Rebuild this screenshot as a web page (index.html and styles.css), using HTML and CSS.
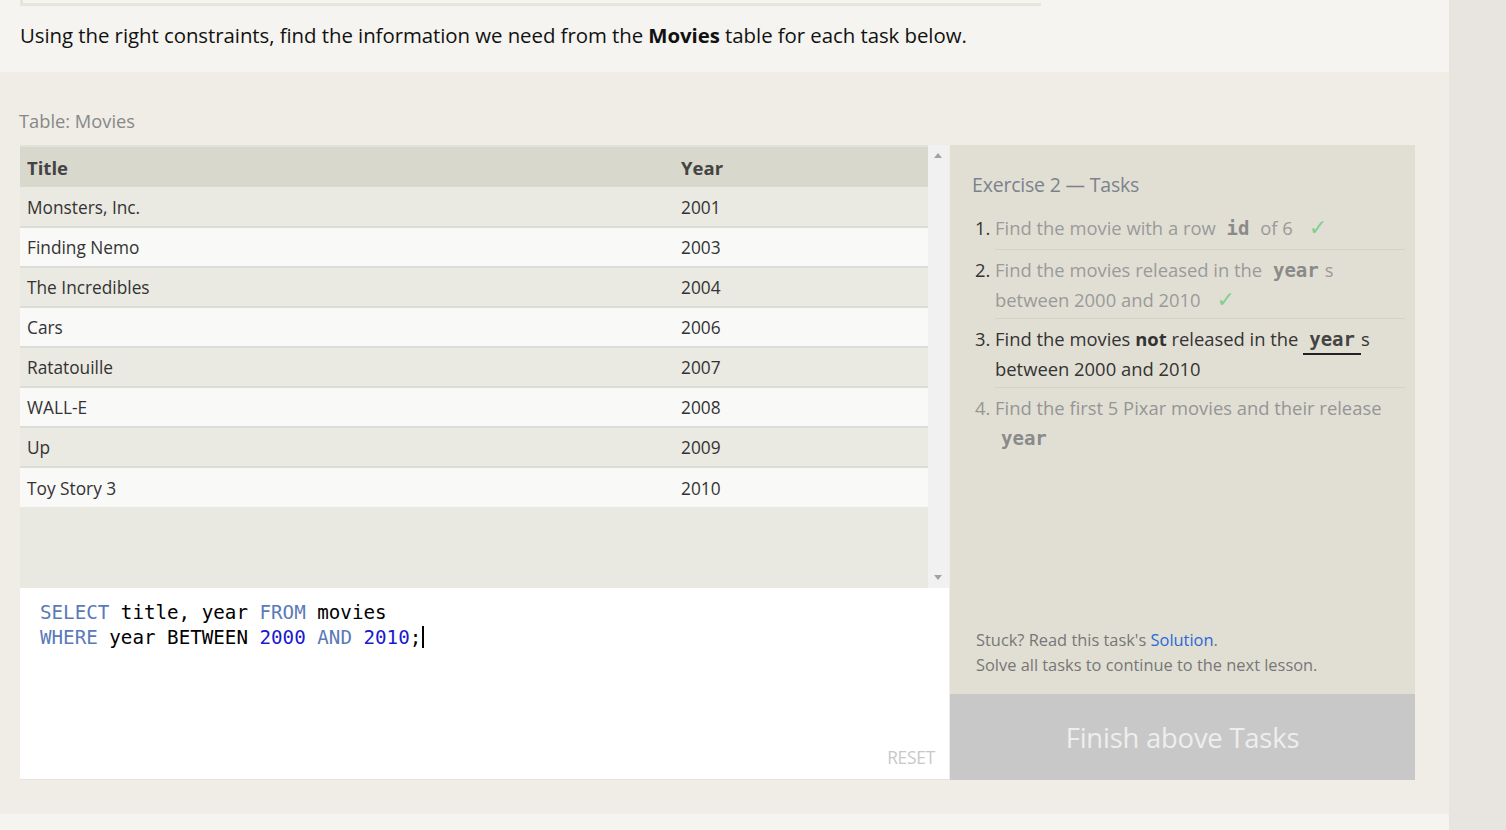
FILE: index.html
```html
<!DOCTYPE html>
<html>
<head>
<meta charset="utf-8">
<link rel="stylesheet" href="styles.css">
</head>
<body>
<div class="page">
  <main class="main">
    <section class="intro">
      <div class="topbar"></div>
      <p class="intro-text">Using the right constraints, find the information we need from the <strong>Movies</strong> table for each task below.</p>
    </section>
    <section class="band">
      <div class="table-label">Table: Movies</div>
      <div class="exercise">
        <div class="left">
          <div class="table-wrap">
            <div class="table-scroll">
              <table class="movies">
                <thead><tr><th class="c-title">Title</th><th class="c-year">Year</th></tr></thead>
                <tbody>
                  <tr><td>Monsters, Inc.</td><td>2001</td></tr>
                  <tr><td>Finding Nemo</td><td>2003</td></tr>
                  <tr><td>The Incredibles</td><td>2004</td></tr>
                  <tr><td>Cars</td><td>2006</td></tr>
                  <tr><td>Ratatouille</td><td>2007</td></tr>
                  <tr><td>WALL-E</td><td>2008</td></tr>
                  <tr><td>Up</td><td>2009</td></tr>
                  <tr><td>Toy Story 3</td><td>2010</td></tr>
                </tbody>
              </table>
            </div>
            <div class="scrollbar">
              <span class="arrow up"></span>
              <span class="arrow down"></span>
            </div>
          </div>
          <div class="editor">
            <pre class="code"><span class="kw">SELECT</span> title, year <span class="kw">FROM</span> movies
<span class="kw">WHERE</span> year BETWEEN <span class="num">2000</span> <span class="kw">AND</span> <span class="num">2010</span>;<span class="caret"></span></pre>
            <div class="reset">RESET</div>
          </div>
        </div>
        <aside class="tasks">
          <div class="tasks-body">
            <h3 class="tasks-title">Exercise 2 — Tasks</h3>
            <ol class="task-list">
              <li class="done"><span class="t">Find the movie with a row <code>id</code> of 6</span><span class="check">✓</span></li>
              <li class="done"><span class="t">Find the movies released in the <code>year</code>s between 2000 and 2010</span><span class="check">✓</span></li>
              <li class="active">Find the movies <b>not</b> released in the <code class="cur">year</code>s between 2000 and 2010</li>
              <li class="todo">Find the first 5 Pixar movies and their release <code>year</code></li>
            </ol>
            <div class="help">
              <p>Stuck? Read this task's <a href="#">Solution</a>.</p>
              <p>Solve all tasks to continue to the next lesson.</p>
            </div>
          </div>
          <div class="finish">Finish above Tasks</div>
        </aside>
      </div>
    </section>
    <div class="after"></div>
  </main>
  <div class="side"></div>
</div>
</body>
</html>
```
FILE: styles.css
```css
* { box-sizing: border-box; }
html, body { margin: 0; padding: 0; }
body {
  font-family: "Open Sans", "Noto Sans", sans-serif;
  color: #222;
  background: #f5f4f0;
  width: 1506px;
  height: 830px;
  overflow: hidden;
}
.page { display: flex; height: 830px; }
.main { width: 1449px; background: #f5f4f0; display: flex; flex-direction: column; }
.side { flex: 1; background: #e8e5e1; }

.intro { height: 72px; padding: 0 20px; }
.topbar {
  width: 1021px;
  height: 6px;
  border-left: 3px solid #e6e5dc;
  border-bottom: 3px solid #e6e5dc;
}
.intro-text {
  margin: 0;
  padding-top: 15px;
  font-size: 20.4px;
  line-height: 28px;
  color: #111;
  letter-spacing: -0.05px;
}
.intro-text strong { font-weight: 700; }

.band { background: #efede6; height: 742px; padding: 36px 0 0 20px; }
.table-label {
  font-size: 18.3px;
  line-height: 26px;
  color: #888;
  height: 37px;
  margin-left: -1px;
}
.exercise { display: flex; width: 1395px; height: 635px; }
.left { width: 929px; display: flex; flex-direction: column; }

.table-wrap { height: 443px; display: flex; background: #e9e8e1; }
.table-scroll { width: 908px; border-top: 2px solid #e2e1da; }
.movies { width: 908px; border-collapse: collapse; font-size: 17.3px; }
.movies th {
  background: #d9d8cc;
  height: 40px;
  text-align: left;
  font-size: 18.5px;
  font-weight: 700;
  color: #444;
  padding: 0 7px;
}
.movies .c-title { width: 654px; }
.movies td {
  height: 40px;
  padding: 1px 7px 0 7px;
  color: #333;
  border-top: 2px solid #dedcd8;
}
.movies tbody tr:first-child td { border-top: none; }
.movies tbody tr:nth-child(odd) td { background: #eae9e2; }
.movies tbody tr:nth-child(even) td { background: #f9f9f8; }

.scrollbar {
  width: 21px;
  background: #f1f1f1;
  position: relative;
}
.arrow {
  position: absolute;
  left: 6px;
  width: 0; height: 0;
  border-left: 4.5px solid transparent;
  border-right: 4.5px solid transparent;
}
.arrow.up { top: 8px; border-bottom: 5px solid #a3a3a3; }
.arrow.down { bottom: 8px; border-top: 5px solid #a3a3a3; }

.editor {
  height: 192px;
  background: #fff;
  border-bottom: 1px solid #e3e2dc;
  padding: 12px 14px 0 20px;
  display: flex;
  flex-direction: column;
  justify-content: space-between;
}
.code {
  margin: 0;
  font-family: "DejaVu Sans Mono", "Liberation Mono", monospace;
  font-size: 19.2px;
  line-height: 25px;
  color: #000;
}
.kw { color: #5a7ab8; }
.num { color: #1a1ad0; }
.caret {
  display: inline-block;
  width: 2px;
  height: 22px;
  background: #000;
  vertical-align: -4px;
  margin-left: 1px;
}
.reset {
  align-self: flex-end;
  font-size: 17.3px;
  line-height: 20px;
  color: #c8c8c8;
  margin-bottom: 11px;
  letter-spacing: -0.2px;
}

.tasks {
  width: 465px;
  margin-left: 1px;
  display: flex;
  flex-direction: column;
  background: #e1dfd4;
}
.tasks-body {
  flex: 1;
  padding: 25px 10px 0 22px;
  display: flex;
  flex-direction: column;
}
.tasks-title {
  margin: 0;
  font-weight: 400;
  font-size: 19.5px;
  line-height: 30px;
  color: #7c828c;
  letter-spacing: -0.2px;
}
.task-list {
  margin: 8px 0 0 0;
  padding-left: 23px;
  font-size: 18.4px;
  line-height: 30px;
}
.task-list li {
  padding: 5px 0 3px 0;
  border-bottom: 1px solid #d5d3c8;
}
.task-list li:first-child { padding-bottom: 6px; }
.task-list li:last-child { border-bottom: none; }
.task-list li.done { color: #9a9a9a; }
.task-list li.done::marker { color: #333; }
.task-list li.active { color: #333; }
.task-list li.todo { color: #959595; }
.task-list code {
  font-family: "DejaVu Sans Mono", "Liberation Mono", monospace;
  font-weight: 700;
  font-size: 19px;
  padding: 0 6px;
  color: #8a8a8a;
}
.task-list li.active code { color: #444; }
.task-list code.cur { border-bottom: 2px solid #222; padding-bottom: 3px; }
.check { color: #7fcf8f; margin-left: 16px; font-size: 22px; font-family: "DejaVu Sans", sans-serif; }

.help { margin-top: auto; padding: 0 0 17px 4px; font-size: 16.4px; line-height: 25px; color: #777; }
.help p { margin: 0; }
.help a { color: #2a68d6; text-decoration: none; }

.finish {
  height: 86px;
  background: #c8c8c8;
  color: #eeeeee;
  font-size: 27.4px;
  font-weight: 400;
  display: flex;
  align-items: center;
  justify-content: center;
  letter-spacing: -0.2px;
}
.after { flex: 1; }
```
